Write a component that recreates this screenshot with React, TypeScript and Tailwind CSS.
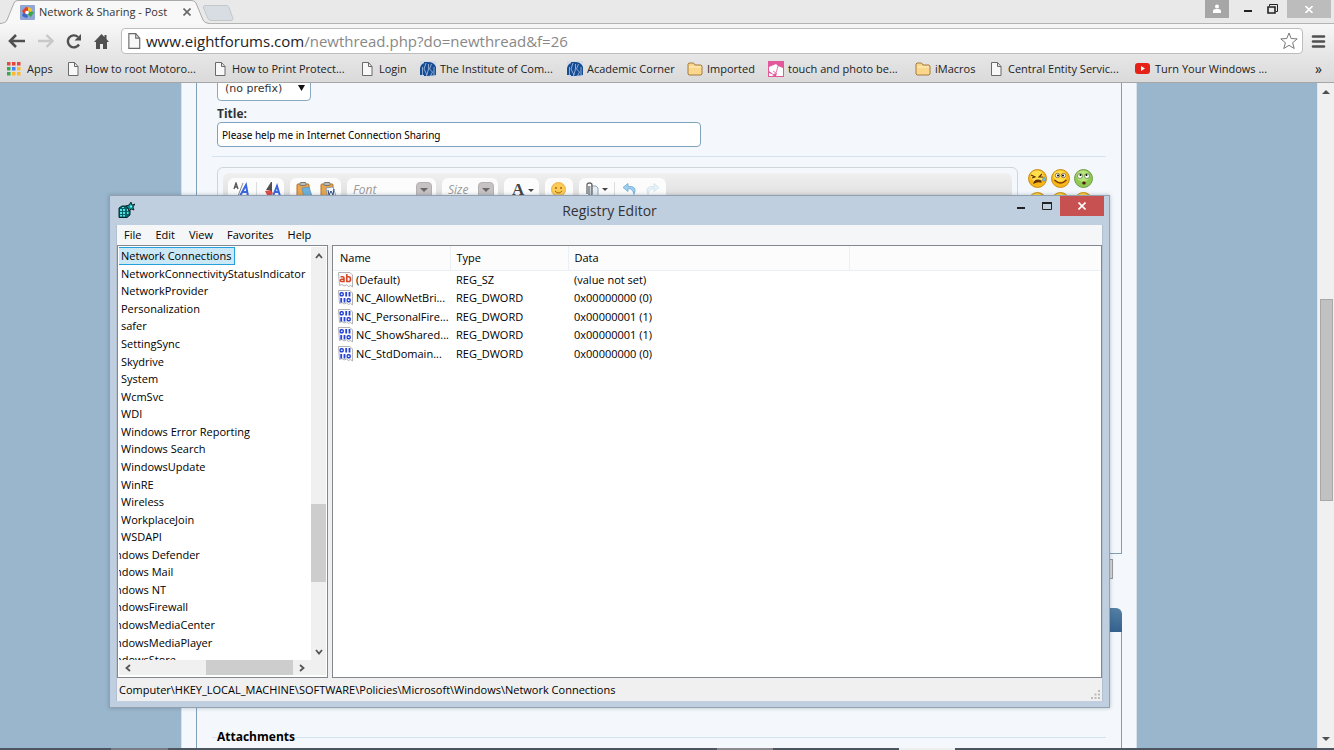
import React from 'react';

const folders = [
  'Network Connections',
  'NetworkConnectivityStatusIndicator',
  'NetworkProvider',
  'Personalization',
  'safer',
  'SettingSync',
  'Skydrive',
  'System',
  'WcmSvc',
  'WDI',
  'Windows Error Reporting',
  'Windows Search',
  'WindowsUpdate',
  'WinRE',
  'Wireless',
  'WorkplaceJoin',
  'WSDAPI',
];

// one level up in the tree, so they start left of the visible area
const parentFolders = [
  'Windows Defender',
  'Windows Mail',
  'Windows NT',
  'WindowsFirewall',
  'WindowsMediaCenter',
  'WindowsMediaPlayer',
  'WindowsStore',
];

const values = [
  { name: '(Default)', type: 'REG_SZ', data: '(value not set)' },
  { name: 'NC_AllowNetBri...', type: 'REG_DWORD', data: '0x00000000 (0)' },
  { name: 'NC_PersonalFire...', type: 'REG_DWORD', data: '0x00000001 (1)' },
  { name: 'NC_ShowShared...', type: 'REG_DWORD', data: '0x00000001 (1)' },
  { name: 'NC_StdDomain...', type: 'REG_DWORD', data: '0x00000000 (0)' },
];

const bookmarks = [
  { label: 'Apps', icon: 'apps', width: 'w-[60px]' },
  { label: 'How to root Motoro...', icon: 'page', width: 'w-[147px]' },
  { label: 'How to Print Protect...', icon: 'page', width: 'w-[147px]' },
  { label: 'Login', icon: 'page', width: 'w-[59px]' },
  { label: 'The Institute of Com...', icon: 'icsi', width: 'w-[147px]' },
  { label: 'Academic Corner', icon: 'icsi', width: 'w-[120px]' },
  { label: 'Imported', icon: 'folder', width: 'w-[81px]' },
  { label: 'touch and photo be...', icon: 'pink', width: 'w-[147px]' },
  { label: 'iMacros', icon: 'folder', width: 'w-[75px]' },
  { label: 'Central Entity Servic...', icon: 'page', width: 'w-[145px]' },
  { label: 'Turn Your Windows ...', icon: 'youtube', width: 'w-[147px]' },
];

const PageIcon = ({ size = 14 }: { size?: number }) => (
  <svg width={size - 2} height={size} viewBox="0 0 12 14" className="shrink-0">
    <path d="M1.500.5h6l3.500 4v9H1.500z" fill="#f8f8f8" stroke="#6a6a6a" />
    <path d="M7.500.5v4H11" fill="none" stroke="#6a6a6a" />
  </svg>
);

const BookmarkIcon = ({ icon }: { icon: string }) => {
  if (icon === 'apps') {
    const colors = ['#e8453c', '#e8453c', '#e8453c', '#34a853', '#4285f4', '#f9bb2d', '#34a853', '#f9bb2d', '#f9bb2d'];
    return (
      <svg width="14" height="14" viewBox="0 0 14 14" className="shrink-0">
        {colors.map((c, i) => (
          <rect key={i} x={(i % 3) * 5} y={Math.floor(i / 3) * 5} width="3.500" height="3.500" fill={c} />
        ))}
      </svg>
    );
  }
  if (icon === 'icsi') {
    return (
      <svg width="16" height="16" viewBox="0 0 16 16" className="shrink-0">
        <path d="M0 0h16v16H0z" fill="#d3dae5" />
        <path d="M0 14V7q1-4 4-5v12zM4 15V1h4v14zM8 15V1q6 0 8 5v8z" fill="#184d94" />
        <path d="M2.500 6v8M6 2L4 8l3 6M8.500 3v5l-2 7M11.500 3l-2 5 3 3-2 4M14 6v8" fill="none" stroke="#a9c4e4" strokeWidth=".8" />
      </svg>
    );
  }
  if (icon === 'folder') {
    return (
      <svg width="16" height="14" viewBox="0 0 16 14" className="shrink-0">
        <path d="M1 12V2l1-1h4.500L8 3h6l1 1v8l-1 1H2z" fill="#fbd78c" stroke="#a57b3f" />
        <path d="M2 5h12" stroke="#fff0c8" />
      </svg>
    );
  }
  if (icon === 'pink') {
    return (
      <svg width="16" height="16" viewBox="0 0 16 16" className="shrink-0">
        <path d="M0 0h16v16H0z" fill="#e2589a" />
        <path d="M1 6l7-3 2 2 5 2v8H8l1-3-4 1-4-3zM1 12l5 2-2 1H1z" fill="#fff" />
        <path d="M10 5l-2 7-3-2" fill="none" stroke="#e2589a" strokeWidth=".8" />
      </svg>
    );
  }
  if (icon === 'youtube') {
    return (
      <svg width="15" height="11" viewBox="0 0 15 11" className="shrink-0">
        <rect width="15" height="11" rx="3" fill="#e62117" />
        <path d="M6 3l4 2.500L6 8z" fill="#fff" />
      </svg>
    );
  }
  return <PageIcon />;
};

const TabStrip = () => (
  <div className="h-6 shrink-0 bg-[#e9e9e9] border-b border-[#b4b4b4] flex items-start">
    <div className="relative w-[210px] h-6">
      <svg className="absolute inset-0" width="210" height="24" viewBox="0 0 210 24">
        <path d="M0 23.500Q6 23 7 20L14 3Q15 .5 18 .5H191Q195 .5 196 3L203 20Q204 23 209 23.500V24H0z" fill="#f8f8f8" />
        <path d="M0 23.500Q6 23 7 20L14 3Q15 .5 18 .5H191Q195 .5 196 3L203 20Q204 23 209 23.500" fill="none" stroke="#aaa" />
      </svg>
      <div className="relative h-6 flex items-center pl-5">
        <svg width="15" height="15" viewBox="0 0 15 15" className="shrink-0">
          <rect width="15" height="15" rx="1" fill="#92a6d4" />
          <path d="M2 6l4-4 3 1-1 5-4 1z" fill="#e0432c" />
          <path d="M9 6l5 1-3 5-3-2z" fill="#3aa648" />
          <path d="M3 8l4 1 1 3-2 1-4-2z" fill="#3c68c8" />
          <path d="M8 2l4 2-1 3-3-1z" fill="#f4c62c" />
          <circle cx="7" cy="7.500" r="1.800" fill="#fff" />
        </svg>
        <span className="ml-1 w-[137px] overflow-hidden whitespace-nowrap text-[11px] leading-4 text-[#333]">Network &amp; Sharing - Post</span>
        <button aria-label="Close tab" className="ml-[3px] p-1">
          <svg width="8" height="8" viewBox="0 0 8 8"><path d="M.5.5l7 7M7.500.5l-7 7" stroke="#666" strokeWidth="1.600" /></svg>
        </button>
      </div>
    </div>
    <button aria-label="New tab" className="-ml-2 mt-[5px]">
      <svg width="32" height="16" viewBox="0 0 32 16">
        <path d="M3 .5h21q2 0 3 2l4 11q0 2-2 2H9q-2 0-3-2L1.500 3Q1 .5 3 .5z" fill="#d7dde2" stroke="#c3c7ca" />
      </svg>
    </button>
    <div className="ml-auto flex pr-[3px]">
      <button aria-label="User" className="w-6 h-[18px] bg-[#a6a6a6] flex justify-center items-center">
        <svg width="10" height="10" viewBox="0 0 10 10"><circle cx="5" cy="2.500" r="2" fill="#fff" /><path d="M1 9V7q0-2 3-2h2q3 0 3 2v2z" fill="#fff" /></svg>
      </button>
      <button aria-label="Minimize" className="w-[38px] h-[18px] flex justify-center items-center pt-1">
        <svg width="8" height="2" viewBox="0 0 8 2"><path d="M0 0h8v2H0z" fill="#222" /></svg>
      </button>
      <button aria-label="Restore" className="w-5 h-[18px] flex items-center">
        <svg width="11" height="10" viewBox="0 0 11 10" fill="none" stroke="#222"><path d="M2.500 2V.5h8v7H9" /><path d="M1 3h7v6H1z" strokeWidth="1.600" /></svg>
      </button>
      <button aria-label="Close" className="w-11 h-[18px] bg-[#bcbcbc] flex justify-center items-center">
        <svg width="8" height="7" viewBox="0 0 8 7"><path d="M.5 0l7 7M7.500 0l-7 7" stroke="#fff" strokeWidth="1.600" /></svg>
      </button>
    </div>
  </div>
);

const Toolbar = () => (
  <div className="h-[31px] shrink-0 bg-gradient-to-b from-[#f7f7f7] to-[#e6e6e6] flex items-center pl-2 pr-2 pt-[3px]">
    <button aria-label="Back" className="w-7">
      <svg width="17" height="14" viewBox="0 0 17 14" fill="none" stroke="#505050" strokeWidth="2.600"><path d="M8 1L2 7l6 6M2 7h15" /></svg>
    </button>
    <button aria-label="Forward" className="w-7 pl-[2px]">
      <svg width="16" height="14" viewBox="0 0 16 14" fill="none" stroke="#c8c8c8" strokeWidth="2.400"><path d="M8.500 1l6 6-6 6M14.500 7H0" /></svg>
    </button>
    <button aria-label="Reload" className="w-7 pl-[2px]">
      <svg width="16" height="16" viewBox="0 0 16 16"><path d="M13 11.500A6 6 0 1 1 12 4" fill="none" stroke="#505050" strokeWidth="2.400" /><path d="M15 1v6.500H8.500z" fill="#505050" /></svg>
    </button>
    <button aria-label="Home" className="w-[29px] pl-[2px]">
      <svg width="15" height="15" viewBox="0 0 15 15"><path d="M7.500 0L0 8h2v7h4v-5h3v5h4V8h2L12.500 5V1h-2v2z" fill="#505050" /></svg>
    </button>
    <div className="flex-1 h-[26px] bg-white border border-[#bdbdbd] rounded-sm flex items-center pl-[5px] pr-1">
      <PageIcon size={16} />
      <div className="relative flex-1 ml-[5px] text-[15px] leading-5">
        <input aria-label="Address" defaultValue="www.eightforums.com/newthread.php?do=newthread&f=26" className="w-full outline-none text-transparent" />
        <div aria-hidden="true" className="absolute inset-0 bg-white pointer-events-none text-[#888]">
          <span className="text-[#222]">www.eightforums.com</span>/newthread.php?do=newthread&amp;f=26
        </div>
      </div>
      <button aria-label="Bookmark this page">
        <svg width="18" height="18" viewBox="0 0 18 18"><path d="M9 1l2.200 5.500 6 .4-4.600 3.800L14.200 16.500 9 13.300 3.800 16.500 5.400 10.700.8 6.900l6-.4z" fill="#fff" stroke="#777" /></svg>
      </button>
    </div>
    <button aria-label="Menu" className="ml-2">
      <svg width="15" height="13" viewBox="0 0 15 13"><path d="M2 1.500h11M2 6.500h11M2 11.500h11" stroke="#505050" strokeWidth="2.600" strokeLinecap="round" /></svg>
    </button>
  </div>
);

const BookmarksBar = () => (
  <nav className="h-7 shrink-0 bg-gradient-to-b from-[#e6e6e6] to-[#dadada] border-b border-[#a6a6a6] flex items-center pl-[7px] pr-3 text-[11px] leading-4 text-[#222]">
    {bookmarks.map((b) => (
      <a key={b.label} href="#" className={`${b.width} shrink-0 flex items-center gap-1 whitespace-nowrap`}>
        <span className={b.icon === 'page' ? 'w-[14px] flex' : 'w-4 flex'}>
          <BookmarkIcon icon={b.icon} />
        </span>
        {b.label}
      </a>
    ))}
    <button aria-label="More bookmarks" className="ml-auto text-[14px]">»</button>
  </nav>
);

const Face = ({ kind }: { kind: string }) => (
  <svg width="19" height="19" viewBox="0 0 19 19">
    <circle cx="9.500" cy="9.500" r="9" fill={kind === 'sick' ? '#8fcb52' : '#f7b718'} stroke={kind === 'sick' ? '#6f9a48' : '#c98d1c'} />
    <ellipse cx="9" cy="7" rx="6.500" ry="5.500" fill={kind === 'sick' ? '#b7e57c' : '#ffe04a'} />
    {kind === 'cry' && (
      <g fill="none" stroke="#5c2a08" strokeWidth="1.100">
        <path d="M3 6l4 2-3 1M14 5l-3 3h4" />
        <path d="M6 14q1-3 4-3t3 2q-3-1-7 1z" fill="#a3341c" />
        <path d="M16 8q3 4 0 4t0-4z" fill="#7cc4f2" stroke="#3a86c2" strokeWidth=".6" />
      </g>
    )}
    {kind === 'smile' && (
      <g>
        <circle cx="6.500" cy="6.500" r="2.200" fill="#fff" stroke="#5c2a08" strokeWidth=".6" />
        <circle cx="12.500" cy="6.500" r="2.200" fill="#fff" stroke="#5c2a08" strokeWidth=".6" />
        <circle cx="7" cy="6.500" r="1" /><circle cx="12" cy="6.500" r="1" />
        <path d="M3.500 11q6 6 12 0" fill="none" stroke="#7a3706" strokeWidth="1.300" />
      </g>
    )}
    {kind === 'sick' && (
      <g>
        <circle cx="6" cy="7" r="2.500" fill="#fff" stroke="#3d5e21" strokeWidth=".6" />
        <circle cx="13" cy="7" r="2.500" fill="#fff" stroke="#3d5e21" strokeWidth=".6" />
        <circle cx="6.500" cy="6" r="1" /><circle cx="12.500" cy="6" r="1" />
        <ellipse cx="10" cy="14" rx="1.800" ry="1.500" fill="#5a1510" />
      </g>
    )}
  </svg>
);

const ToolGroup = ({ className = '', children }: { className?: string; children: React.ReactNode }) => (
  <div className={`h-7 rounded-md bg-[#fcfcfc] flex items-start pt-1 ${className}`}>{children}</div>
);

const DropArrow = () => (
  <span className="w-4 h-[18px] bg-[#c6c2c4] rounded-sm border border-[#b5b1b3] flex justify-center pt-[5px]">
    <svg width="8" height="4" viewBox="0 0 8 4"><path d="M0 0h8L4 4z" fill="#6b6668" /></svg>
  </span>
);

const ClipboardIcon = ({ word }: { word?: boolean }) => (
  <svg width="16" height="16" viewBox="0 0 16 16">
    <rect x="1" y="2" width="12" height="13" rx="1" fill="#e9a64c" stroke="#b1732a" />
    <rect x="4" y=".5" width="6" height="3" rx="1" fill="#bbb" stroke="#777" />
    <path d="M6 6l7-1 3 9-8 2z" fill={word ? '#f3f6fc' : '#6bb3dd'} stroke="#6c88a8" strokeWidth=".7" />
    {word && <path d="M8 8l1 5 2-4 2 4 1-6" fill="none" stroke="#24477e" />}
  </svg>
);

const EditorToolbar = () => (
  <div className="h-12 rounded-md bg-gradient-to-b from-[#f1f0f0] to-[#cfcfcf] flex items-start gap-[6px] pl-[5px] pt-[5px]">
    <ToolGroup className="w-14 gap-2 pl-[5px]">
      <button aria-label="Remove formatting" className="border-r border-[#ddd] pr-[6px]">
        <svg width="17" height="15" viewBox="0 0 17 15" fill="none">
          <path d="M1 7l2-6 2 6M1.500 5h3" stroke="#555" strokeWidth="1.300" />
          <path d="M10 1L5 14" stroke="#888" />
          <path d="M7 14l6-11 2 11M9.500 10h5" stroke="#3b66e0" strokeWidth="2" />
        </svg>
      </button>
      <button aria-label="Switch editor mode">
        <svg width="16" height="15" viewBox="0 0 16 15"><path d="M6 0L1 8h4v4h2V0z" fill="#505050" /><path d="M0 9l5-1 3 3-3 4H3z" fill="#e04b45" /><path d="M8 14l4-10 3 10M9 10h5" fill="none" stroke="#3b66e0" strokeWidth="2" /></svg>
      </button>
    </ToolGroup>
    <ToolGroup className="w-[51px] gap-2 px-[6px]">
      <button aria-label="Paste as text"><ClipboardIcon /></button>
      <button aria-label="Paste from Word"><ClipboardIcon word /></button>
    </ToolGroup>
    <ToolGroup className="w-[89px] justify-between pl-[6px] pr-1 text-[12px] leading-4 italic text-[#999]">
      <span>Font</span>
      <button aria-label="Choose font"><DropArrow /></button>
    </ToolGroup>
    <ToolGroup className="w-14 justify-between pl-[6px] pr-1 text-[12px] leading-4 italic text-[#999]">
      <span>Size</span>
      <button aria-label="Choose size"><DropArrow /></button>
    </ToolGroup>
    <ToolGroup className="w-[35px]">
      <button className="flex items-center gap-1 pl-2 font-['Liberation_Serif'] font-bold text-[17px] leading-4 text-[#444]">
        A
        <svg width="6" height="3" viewBox="0 0 6 3"><path d="M0 0h6L3 3z" fill="#444" /></svg>
      </button>
    </ToolGroup>
    <ToolGroup className="w-7 pl-[6px]">
      <button aria-label="Smilies">
        <svg width="15" height="15" viewBox="0 0 15 15"><circle cx="7.500" cy="7.500" r="7" fill="#fbcb55" stroke="#eeb13c" /><circle cx="5" cy="6" r="1" fill="#a36a12" /><circle cx="10" cy="6" r="1" fill="#a36a12" /><path d="M4 9q3.500 4 7 0" fill="none" stroke="#a36a12" /></svg>
      </button>
    </ToolGroup>
    <ToolGroup className="w-[87px] pl-[7px]">
      <button aria-label="Attachments" className="flex items-center gap-[3px]">
        <svg width="13" height="15" viewBox="0 0 13 15" fill="none" stroke="#666"><path d="M5 4h5l2 2v9H5z" fill="#e6eef5" stroke="#8fa5b8" /><path d="M1 12V3q0-2 2.500-2T6 3v9q0 2-1.500 2T3 12V4" strokeWidth="1.300" /></svg>
        <svg width="6" height="3" viewBox="0 0 6 3"><path d="M0 0h6L3 3z" fill="#444" /></svg>
      </button>
      <button aria-label="Undo" className="border-l border-[#ddd] ml-[6px] pl-2 pt-px">
        <svg width="13" height="13" viewBox="0 0 13 12"><path d="M5 0L0 4l5 4V5q5 0 6 6 4-9-6-8z" fill="#a3cfee" stroke="#6ba9d6" strokeWidth=".8" /></svg>
      </button>
      <button aria-label="Redo" className="pl-[10px] pt-px">
        <svg width="13" height="13" viewBox="0 0 13 12"><path d="M8 0l5 4-5 4V5Q3 5 2 11-2 2 8 3z" fill="#e6f2f8" stroke="#cfe3ee" strokeWidth=".8" /></svg>
      </button>
    </ToolGroup>
  </div>
);

const ForumPage = () => (
  <main className="flex-1 min-w-0 bg-[#9ab6cc] overflow-hidden">
    <div className="mx-[181px] mr-[180px] h-full bg-[#f4f8fc] border-x border-[#d5e2ec] px-[14px] overflow-hidden">
      <section className="h-[477px] border-x border-b border-[#7f9fb8] px-[15px]">
        <div className="px-[5px] -mt-[6px] text-[12px] leading-4">
          <div className="relative w-[94px]">
            <select aria-label="Prefix" className="block w-full h-6 pl-[7px] appearance-none bg-white border border-[#89a9c0] rounded text-[11px] text-[#333] font-['DejaVu_Sans']">
              <option>(no prefix)</option>
            </select>
            <svg className="absolute right-[6px] top-[8px] pointer-events-none" width="7" height="6" viewBox="0 0 7 6"><path d="M0 0h7L3.500 6z" fill="#111" /></svg>
          </div>
          <label htmlFor="title" className="block pt-[5px] h-[21px] font-bold text-[#333]">Title:</label>
          <input
            id="title"
            defaultValue="Please help me in Internet Connection Sharing"
            className="block w-[484px] h-[25px] px-1 bg-white border border-[#7fa3bd] rounded text-[10px] text-black outline-none font-['Noto_Sans']"
          />
        </div>
        <hr className="mt-[9px] border-[#d3e3ef]" />
        <div className="pl-[5px] pr-1 mt-[10px] flex items-start gap-[10px]">
          <div className="flex-1 h-[300px] p-[5px] rounded-md border border-[#cfd6db]">
            <EditorToolbar />
          </div>
          <div className="grid grid-cols-3 gap-1 w-[65px] mr-[9px] pt-[2px]">
            <Face kind="cry" />
            <Face kind="smile" />
            <Face kind="sick" />
            <Face kind="cry" />
            <Face kind="smile" />
            <Face kind="smile" />
          </div>
        </div>
      </section>
      <div className="h-[54px] pt-[5px] flex justify-end pr-[9px]">
        <div className="w-20 h-5 bg-[#d9d9d9] border border-[#9a9a9a]" />
      </div>
      <div className="h-6 rounded-t-md bg-gradient-to-b from-[#5480a6] to-[#34628c]" />
      <section className="h-[200px] border-x border-[#7f9fb8] px-[15px]">
        <div className="pt-[97px] flex items-center text-[12px] leading-4 font-bold text-black">
          <span className="w-[5px] border-t border-[#d3e3ef]" />
          <h2>Attachments</h2>
          <span className="flex-1 border-t border-[#d3e3ef]" />
        </div>
      </section>
    </div>
  </main>
);

const PageScrollbar = () => (
  <div className="w-[17px] shrink-0 bg-[#f0f0f0] border-l border-[#e2e6ea] flex flex-col items-center">
    <button aria-label="Scroll up" className="h-[17px]">
      <svg width="8" height="4" viewBox="0 0 8 4"><path d="M0 4h8L4 0z" fill="#505050" /></svg>
    </button>
    <div className="flex-[200_0_0px]" />
    <div className="flex-[200_0_0px] w-[13px] bg-[#c1c1c1] border border-[#a8a8a8]" />
    <div className="flex-[231_0_0px]" />
    <button aria-label="Scroll down" className="h-[17px]">
      <svg width="8" height="4" viewBox="0 0 8 4"><path d="M0 0h8L4 4z" fill="#505050" /></svg>
    </button>
  </div>
);

const ValueIcon = ({ text }: { text?: boolean }) => (
  <svg width="16" height="16" viewBox="0 0 16 16" className="shrink-0">
    <path d="M.5.5H12l2.500 2.500v12l-2-1.500-2 1-2-1.500-2.500 1-2-1.500-2.500 1z" fill="#fbfbfb" stroke="#b3b3b3" />
    {text ? (
      <path d="M2.500 4.800h2.200q1.300 0 1.300 1.400v3.300H3.500q-1.200 0-1.200-1T3.500 7.300H6M8.800 2v7.500h2q1.700 0 1.700-2.300t-1.700-2.400h-2" fill="none" stroke="#d8492c" strokeWidth="1.600" />
    ) : (
      <g fill="none" stroke="#2340d8" strokeWidth="1.400">
        <rect x="2.200" y="2.700" width="3" height="3" rx="1" />
        <path d="M8.200 2v4.400M11.500 2v4.400M3.200 8v4.400M6.500 8v4.400" strokeWidth="1.800" />
        <rect x="9.200" y="8.700" width="3" height="3" rx="1" />
      </g>
    )}
  </svg>
);

const RegistryTree = () => (
  <div className="w-[211px] shrink-0 bg-white border border-[#828790] p-px pb-[2px] flex flex-col">
    <div className="flex-1 min-h-0 flex">
      <div className="flex-1 min-w-0 overflow-hidden">
        <ul className="h-[422px] flex flex-col whitespace-nowrap">
          {folders.map((name, i) => (
            <li key={name} className="flex-1 flex items-center">
              {i === 0 ? (
                <span className="pl-[2px] pr-[3px] bg-[#cbe8f6] border border-l-0 border-[#26a0da]">{name}</span>
              ) : (
                <span className="pl-[2px]">{name}</span>
              )}
            </li>
          ))}
          {parentFolders.map((name) => (
            <li key={name} className="flex-1 flex items-center -ml-[17px]">
              <span>{name}</span>
            </li>
          ))}
        </ul>
      </div>
      <div className="w-[15px] bg-[#f0f0f0] flex flex-col items-center">
        <button aria-label="Scroll tree up" className="h-[17px]">
          <svg width="8" height="6" viewBox="0 0 8 6"><path d="M1 5l3-3.500L7 5" fill="none" stroke="#555" strokeWidth="1.800" /></svg>
        </button>
        <div className="flex-[240_0_0px]" />
        <div className="flex-[78_0_0px] w-full bg-[#cdcdcd]" />
        <div className="flex-[61_0_0px]" />
        <button aria-label="Scroll tree down" className="h-[17px]">
          <svg width="8" height="6" viewBox="0 0 8 6"><path d="M1 1l3 3.500L7 1" fill="none" stroke="#555" strokeWidth="1.800" /></svg>
        </button>
      </div>
    </div>
    <div className="h-[15px] bg-[#f0f0f0] flex items-center pr-4">
      <button aria-label="Scroll tree left" className="w-[17px] flex justify-center">
        <svg width="6" height="8" viewBox="0 0 6 8"><path d="M5 1L1.500 4 5 7" fill="none" stroke="#555" strokeWidth="1.800" /></svg>
      </button>
      <div className="flex-[70_0_0px]" />
      <div className="flex-[88_0_0px] h-full bg-[#cdcdcd]" />
      <button aria-label="Scroll tree right" className="w-[17px] flex justify-center">
        <svg width="6" height="8" viewBox="0 0 6 8"><path d="M1 1l3.500 3L1 7" fill="none" stroke="#555" strokeWidth="1.800" /></svg>
      </button>
    </div>
  </div>
);

const RegistryValues = () => (
  <div className="flex-1 bg-white border border-[#828790] overflow-hidden">
    <table className="w-full h-[117px] table-fixed text-left whitespace-nowrap">
      <thead>
        <tr className="h-6 bg-[#fcfcfd]">
          <th className="w-[117px] pl-[7px] font-normal border-r border-b border-[#eaf0f6]">Name</th>
          <th className="w-[118px] pl-[6px] font-normal border-r border-b border-[#eaf0f6]">Type</th>
          <th className="w-[281px] pl-[6px] font-normal border-r border-b border-[#eaf0f6]">Data</th>
          <th className="border-b border-[#eaf0f6]" />
        </tr>
      </thead>
      <tbody>
        {values.map((v, i) => (
          <tr key={v.name}>
            <td className="pl-[5px]">
              <div className="flex items-center gap-[2px]">
                <ValueIcon text={i === 0} />
                {v.name}
              </div>
            </td>
            <td className="pl-[6px]">{v.type}</td>
            <td className="pl-[6px]">{v.data}</td>
            <td />
          </tr>
        ))}
      </tbody>
    </table>
  </div>
);

const RegistryWindow = () => (
  <div className="absolute left-[109px] right-[224px] top-[195px] bottom-[42px] bg-[#c0cfdf] border border-[#93a0b0] shadow-[0_0_4px_rgba(60,80,100,0.35)] px-[6px] pb-[6px] flex flex-col text-[11px] leading-4 text-black">
    <header className="relative h-[29px] shrink-0 flex items-center justify-center">
      <svg className="absolute left-[2px] top-[6px]" width="17" height="16" viewBox="0 0 17 16">
        <path d="M1 6l3-2h7l1 1v8l-3 2.500H1z" fill="#086468" stroke="#02282b" />
        <path d="M2 7h2v2H2zM5 7h2v2H5zM2 10h2v2H2zM5 10h2v2H5zM2 13h2v1.500H2zM5 13h2v1.500H5zM4 5h2v1H4zM9 7h1.500v2H9zM9 10h1.500v2H9z" fill="#4fe3e3" />
        <path d="M8 4l3-1 2-3 1 3 3-1-2 3 1 3-3-1-2 2-1-3z" fill="#0d8a8e" stroke="#111" strokeWidth=".8" />
        <path d="M12 3.500h2v2h-2z" fill="#6ff" />
      </svg>
      <h1 className="text-[14px] leading-5 text-[#333]">Registry Editor</h1>
      <div className="absolute right-[-1px] top-0 flex">
        <button aria-label="Minimize window" className="w-[26px] h-5 flex justify-center items-center pt-1">
          <svg width="8" height="2" viewBox="0 0 8 2"><path d="M0 0h8v2H0z" fill="#222" /></svg>
        </button>
        <button aria-label="Maximize window" className="w-[26px] h-5 flex justify-center items-center">
          <svg width="10" height="8" viewBox="0 0 10 8"><path d="M.5 1h9v6.500h-9z" fill="none" stroke="#222" /><path d="M0 0h10v2H0z" fill="#222" /></svg>
        </button>
        <button aria-label="Close window" className="w-11 h-5 bg-[#c75050] flex justify-center items-center">
          <svg width="8" height="8" viewBox="0 0 8 8"><path d="M.5.5l7 7M7.500.5l-7 7" stroke="#fff" strokeWidth="1.600" /></svg>
        </button>
      </div>
    </header>
    <div className="flex-1 min-h-0 flex flex-col border-x border-[#b1bfce] bg-[#f0f0f0]">
      <nav className="h-5 shrink-0 bg-[#f5f6f7] flex items-center gap-[14px] pl-[7px]">
        <button>File</button>
        <button>Edit</button>
        <button>View</button>
        <button>Favorites</button>
        <button>Help</button>
      </nav>
      <div className="flex-1 min-h-0 flex gap-1">
        <RegistryTree />
        <RegistryValues />
      </div>
      <footer className="h-[23px] shrink-0 flex items-center justify-between px-[2px]">
        <span>Computer\HKEY_LOCAL_MACHINE\SOFTWARE\Policies\Microsoft\Windows\Network Connections</span>
        <svg className="self-end mb-[2px]" width="9" height="9" viewBox="0 0 9 9">
          <path d="M7 0h2v2H7zM7 3.500h2v2H7zM3.500 3.500h2v2h-2zM7 7h2v2H7zM3.500 7h2v2h-2zM0 7h2v2H0z" fill="#bbb" />
        </svg>
      </footer>
    </div>
  </div>
);

export default function App() {
  return (
    <div className="relative h-screen overflow-hidden flex flex-col font-['Open_Sans',sans-serif]">
      <TabStrip />
      <Toolbar />
      <BookmarksBar />
      <div className="flex-1 min-h-0 flex">
        <ForumPage />
        <PageScrollbar />
      </div>
      <div className="h-[2px] shrink-0 bg-[#4d5560] flex">
        <div className="w-[57px] ml-[111px] bg-[#777d84]" />
        <div className="w-14 ml-auto bg-[#8e8b90]" />
        <div className="w-14 ml-[126px] mr-[379px] bg-[#eee]" />
      </div>
      <RegistryWindow />
    </div>
  );
}
